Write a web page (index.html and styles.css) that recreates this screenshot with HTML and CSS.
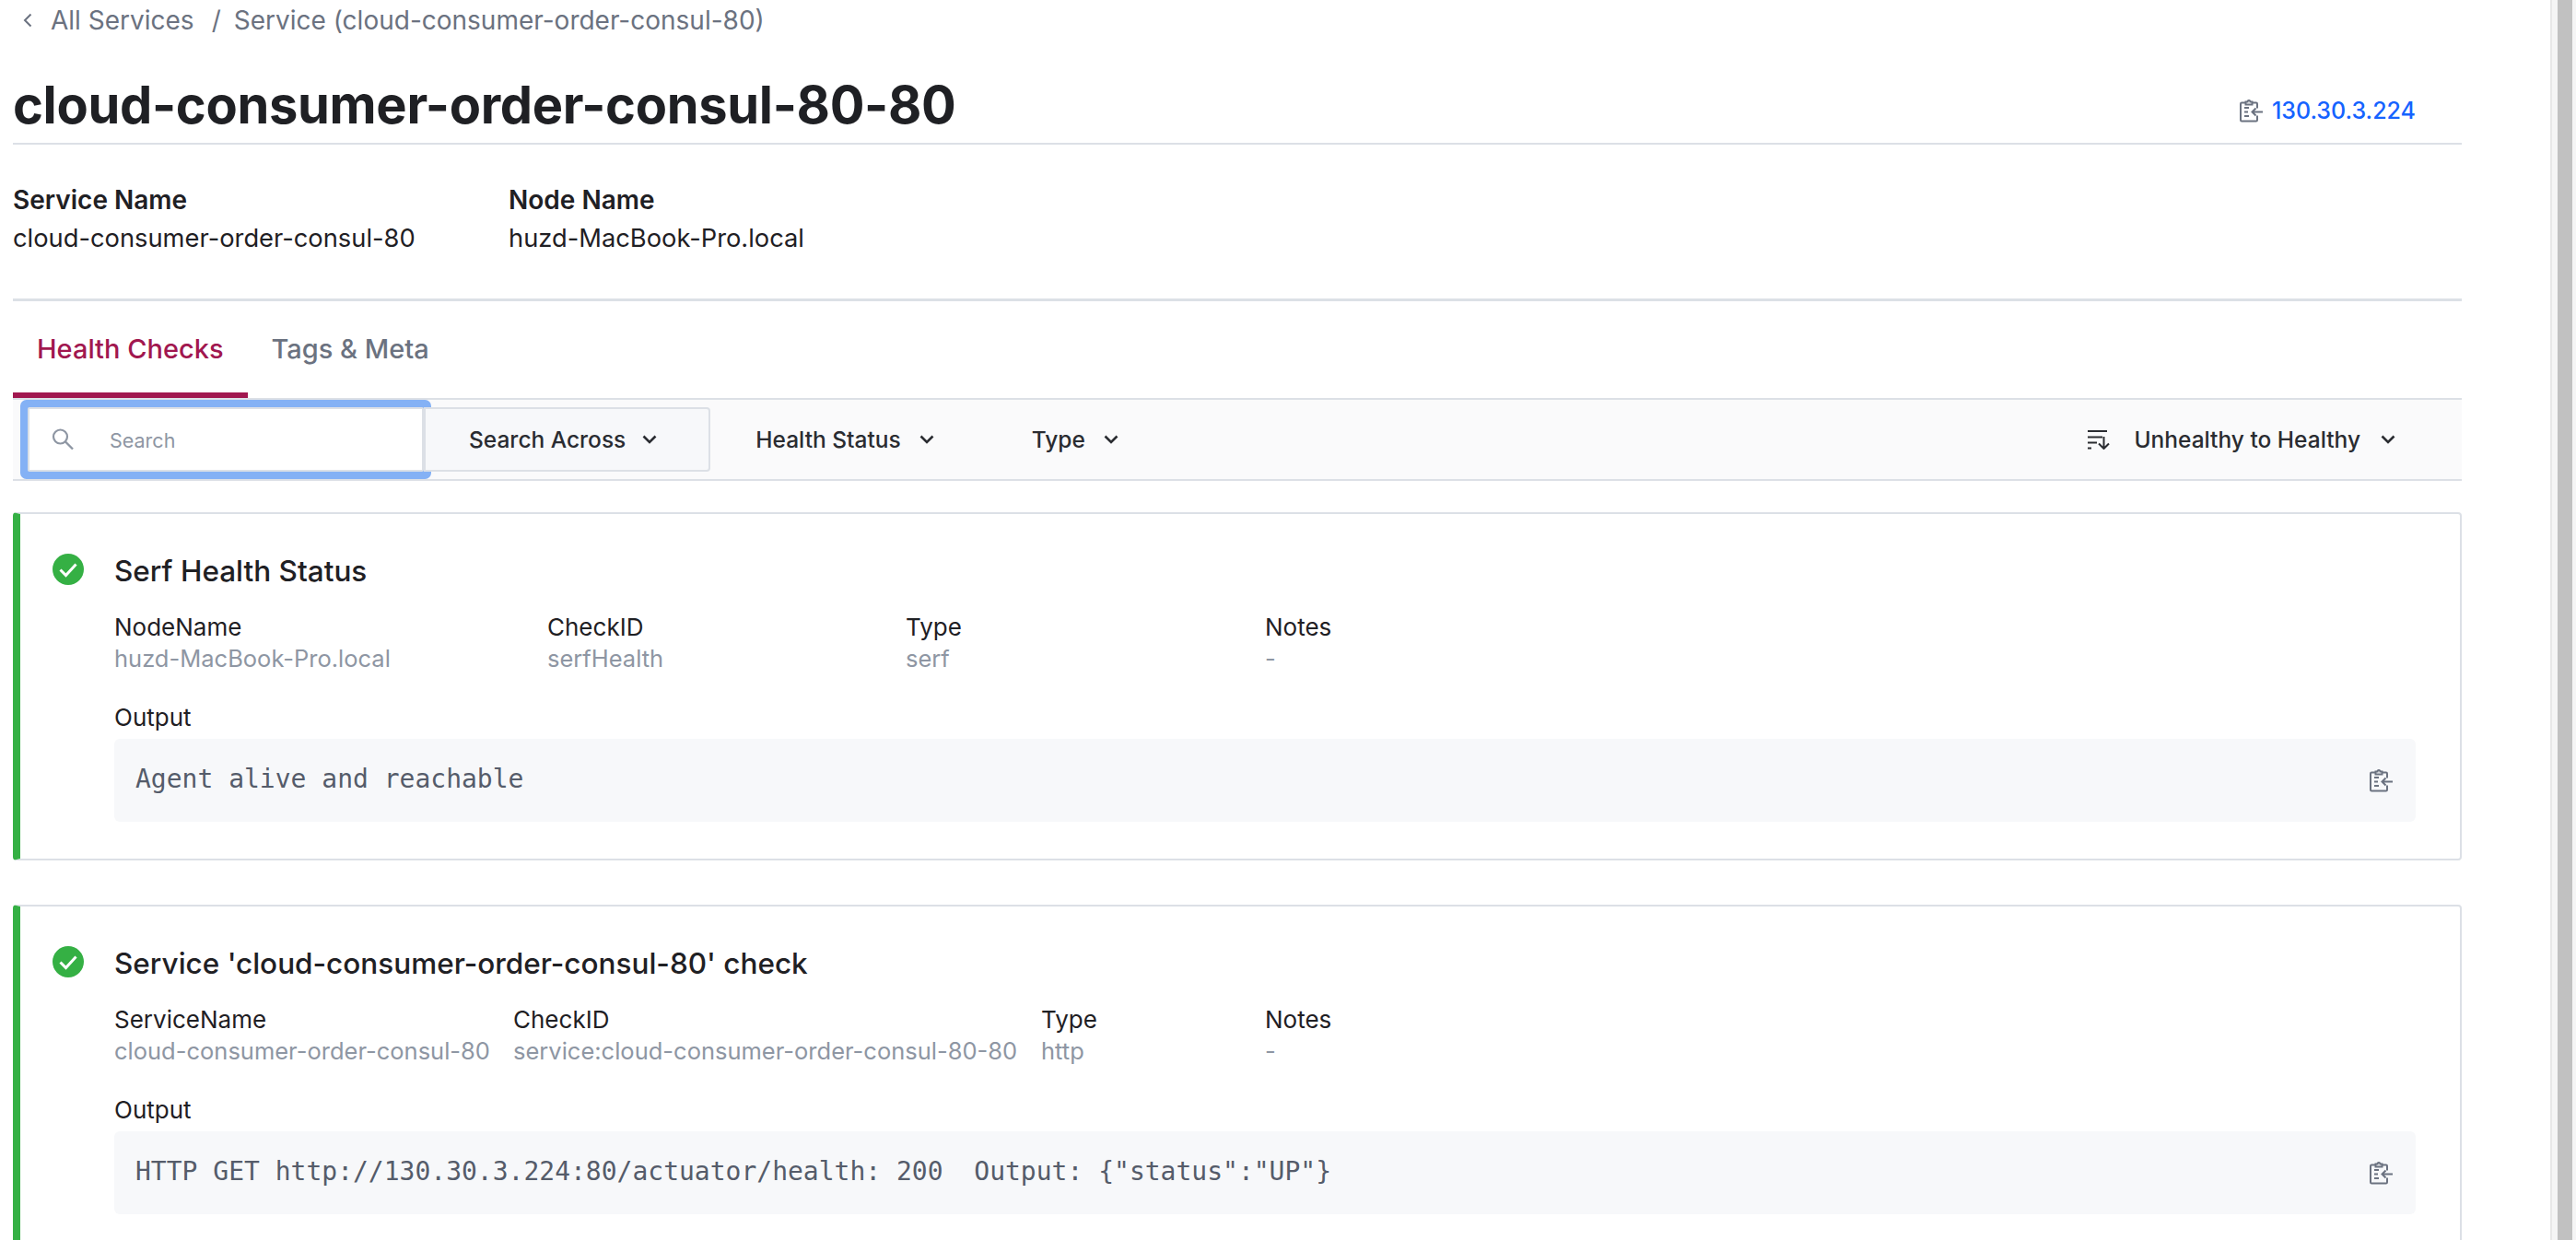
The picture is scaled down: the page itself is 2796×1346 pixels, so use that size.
FILE: index.html
```html
<!DOCTYPE html>
<html lang="en">
<head>
<meta charset="utf-8">
<title>cloud-consumer-order-consul-80-80</title>
<link rel="stylesheet" href="styles.css">
</head>
<body>
<svg class="sprite" width="0" height="0" aria-hidden="true">
  <symbol id="copy" viewBox="0 0 26 26">
    <path d="M7 4.500H3.200a1.200 1.200 0 0 0-1.200 1.200v17.600a1.200 1.200 0 0 0 1.200 1.200h15.600a1.200 1.200 0 0 0 1.200-1.200v-4.800M20 10.500V5.700a1.200 1.200 0 0 0-1.200-1.200H15" fill="none" stroke="currentColor" stroke-width="2"/>
    <path d="M7.500 3.500h2a1.500 1.500 0 0 1 3 0h2v3h-7z" fill="none" stroke="currentColor" stroke-width="2"/>
    <path d="M6 10h5M6 14.500h4M6 19h5" fill="none" stroke="currentColor" stroke-width="2"/>
    <path d="M26 14.500H14.500M18.500 10.500l-4 4 4 4" fill="none" stroke="currentColor" stroke-width="2"/>
  </symbol>
  <symbol id="chevron" viewBox="0 0 16 10">
    <path d="M1.500 1.500L8 8l6.500-6.500" fill="none" stroke="currentColor" stroke-width="2.600"/>
  </symbol>
  <symbol id="ok" viewBox="0 0 34 34">
    <circle cx="17" cy="17" r="17" fill="#35b044"/>
    <path d="M8.500 17.500l6 6 11-12" fill="none" stroke="#fff" stroke-width="3"/>
  </symbol>
</svg>

<div class="window">
  <main class="page">
    <nav class="crumbs">
      <svg class="crumb-back" viewBox="0 0 10 16" width="10" height="16"><path d="M8.500 1.500L2 8l6.500 6.500" fill="none" stroke="currentColor" stroke-width="2"/></svg>
      <a class="crumb">All Services</a>
      <span class="crumb-sep">/</span>
      <a class="crumb">Service (cloud-consumer-order-consul-80)</a>
    </nav>

    <header class="title-row">
      <h1 class="title">cloud-consumer-order-consul-80-80</h1>
      <div class="address">
        <svg class="icon-copy"><use href="#copy"/></svg>
        <span>130.30.3.224</span>
      </div>
    </header>

    <dl class="summary">
      <div class="summary-item summary-service">
        <dt>Service Name</dt>
        <dd>cloud-consumer-order-consul-80</dd>
      </div>
      <div class="summary-item">
        <dt>Node Name</dt>
        <dd>huzd-MacBook-Pro.local</dd>
      </div>
    </dl>

    <div class="tabs">
      <a class="tab tab-active">Health Checks</a>
      <a class="tab">Tags &amp; Meta</a>
    </div>

    <div class="toolbar">
      <label class="search">
        <svg class="search-icon" viewBox="0 0 24 24" width="24" height="24"><circle cx="9.500" cy="9" r="7.500" fill="none" stroke="currentColor" stroke-width="2.200"/><path d="M15 14.500l8 8" fill="none" stroke="currentColor" stroke-width="2.400"/></svg>
        <span class="search-hint">Search</span>
      </label>
      <button class="filter filter-across">Search Across <svg class="chevron"><use href="#chevron"/></svg></button>
      <button class="filter filter-health">Health Status <svg class="chevron"><use href="#chevron"/></svg></button>
      <button class="filter">Type <svg class="chevron"><use href="#chevron"/></svg></button>
      <button class="filter filter-sort">
        <svg class="sort-icon" viewBox="0 0 24 22" width="24" height="22"><path d="M0 2h21M0 8.500h16M0 14.500h10M0 20.500h4" fill="none" stroke="currentColor" stroke-width="2"/><path d="M17.500 8v13M12 15.500l5.500 5.500 5.500-5.500" fill="none" stroke="currentColor" stroke-width="2"/></svg>
        Unhealthy to Healthy <svg class="chevron"><use href="#chevron"/></svg>
      </button>
    </div>

    <section class="check">
      <svg class="check-status"><use href="#ok"/></svg>
      <div class="check-body">
        <h2 class="check-title">Serf Health Status</h2>
        <dl class="fields fields-node">
          <div><dt>NodeName</dt><dd>huzd-MacBook-Pro.local</dd></div>
          <div><dt>CheckID</dt><dd>serfHealth</dd></div>
          <div><dt>Type</dt><dd>serf</dd></div>
          <div><dt>Notes</dt><dd>-</dd></div>
        </dl>
        <div class="output-label">Output</div>
        <div class="output">
          <code>Agent alive and reachable</code>
          <svg class="icon-copy"><use href="#copy"/></svg>
        </div>
      </div>
    </section>

    <section class="check">
      <svg class="check-status"><use href="#ok"/></svg>
      <div class="check-body">
        <h2 class="check-title">Service 'cloud-consumer-order-consul-80' check</h2>
        <dl class="fields fields-service">
          <div><dt>ServiceName</dt><dd>cloud-consumer-order-consul-80</dd></div>
          <div><dt>CheckID</dt><dd>service:cloud-consumer-order-consul-80-80</dd></div>
          <div><dt>Type</dt><dd>http</dd></div>
          <div><dt>Notes</dt><dd>-</dd></div>
        </dl>
        <div class="output-label">Output</div>
        <div class="output">
          <code>HTTP GET http://130.30.3.224:80/actuator/health: 200  Output: {"status":"UP"}</code>
          <svg class="icon-copy"><use href="#copy"/></svg>
        </div>
      </div>
    </section>
  </main>

  <div class="scrollbar"><div class="scrollbar-thumb"></div></div>
</div>
</body>
</html>
```

FILE: styles.css
```css
* { box-sizing: border-box; }

html, body {
  margin: 0;
  height: 100%;
  overflow: hidden;
  background: #fff;
}

body {
  font-family: Inter, "Noto Sans", sans-serif;
  color: #1f2024;
}

.sprite { position: absolute; }

.window {
  display: flex;
  height: 1346px;
  overflow: hidden;
}

.page {
  flex: none;
  width: 2658px;
  margin: 0 96px 0 14px;
}

/* Custom scrollbar strip on the right edge */
.scrollbar {
  flex: none;
  width: 28px;
  padding: 0 4px 0 6px;
  background: #f5f5f5;
  border-left: 2px solid #e8e8e8;
}

.scrollbar-thumb {
  width: 16px;
  height: 100%;
  background: #c1c1c1;
}

/* Breadcrumb */
.crumbs {
  display: flex;
  align-items: center;
  height: 44px;
  padding-left: 11px;
  font-size: 28px;
  color: #6b7280;
}

.crumb-back { margin-right: 20px; }
.crumb-sep { margin: 0 14px 0 19px; }

/* Heading */
.title-row {
  display: flex;
  justify-content: space-between;
  align-items: flex-end;
  height: 113px;
  border-bottom: 2px solid #dce0e6;
}

.title {
  margin: 0 0 7px;
  font-size: 56px;
  line-height: 68px;
  font-weight: 700;
  letter-spacing: -0.33px;
  color: #1f2024;
}

.address {
  display: flex;
  align-items: center;
  gap: 10px;
  margin-bottom: 20px;
  padding-right: 50px;
  font-size: 25px;
  font-weight: 500;
  color: #1563ff;
}

.icon-copy {
  width: 26px;
  height: 26px;
  color: #6b7280;
  flex: none;
}

/* Service summary */
.summary {
  display: flex;
  margin: 0;
  height: 170px;
  padding-top: 39px;
  border-bottom: 3px solid #dce0e6;
  line-height: 42px;
}

.summary-service { width: 538px; }

.summary-item dt {
  font-size: 28px;
  font-weight: 600;
}

.summary-item dd {
  margin: 0;
  font-size: 27.3px;
}

/* Tabs */
.tabs {
  display: flex;
  height: 105px;
}

.tab {
  display: flex;
  align-items: center;
  height: 105px;
  padding: 0 26px 2px;
  font-size: 29px;
  font-weight: 500;
  color: #6b7280;
}

.tab-active {
  color: #a1174f;
  box-shadow: inset 0 -6px 0 #a1174f;
}

/* Filter bar */
.toolbar {
  display: flex;
  align-items: center;
  height: 90px;
  padding: 0 72px 0 16px;
  background: #fafafb;
  border-top: 2px solid #dce0e6;
  border-bottom: 2px solid #dce0e6;
}

.search {
  display: flex;
  align-items: center;
  width: 430px;
  height: 70px;
  padding-left: 24px;
  background: #fff;
  border: 2px solid #dce0e6;
  box-shadow: 0 0 0 8px #84b1f5;
  border-radius: 2px;
  color: #8e96a3;
}

.search-hint {
  margin-left: 39px;
  padding-top: 2px;
  font-size: 21.5px;
}

.filter {
  display: flex;
  align-items: center;
  gap: 20px;
  height: 70px;
  padding: 0 54px 0 50px;
  background: none;
  border: 0;
  font: 500 24.5px Inter, "Noto Sans", sans-serif;
  color: #2a2c31;
}

.filter-across {
  position: relative;
  padding: 0 56px 0 47px;
  background: #f7f8fa;
  border: 2px solid #dce0e6;
  border-radius: 0 4px 4px 0;
  gap: 18px;
}

.filter-health {
  padding-left: 49px;
  padding-right: 56px;
}

.filter-sort {
  margin-left: auto;
  padding: 0;
  gap: 22px;
}

.sort-icon { margin-right: 4px; }

.chevron {
  width: 16px;
  height: 10px;
}

/* Health check cards */
.check {
  display: flex;
  height: 378px;
  margin-top: 34px;
  padding: 43px 48px 0 35px;
  border: 2px solid #dce0e6;
  border-left: 8px solid #35b044;
  border-radius: 4px;
}

.check + .check { margin-top: 48px; }

.check-status {
  flex: none;
  width: 34px;
  height: 34px;
  margin-right: 33px;
}

.check-body { flex: 1; min-width: 0; }

.check-title {
  margin: 0;
  font-size: 31.5px;
  line-height: 38px;
  font-weight: 550;
  color: #1f2024;
}

.fields {
  display: grid;
  margin: 25px 0 0;
  line-height: 34px;
}

.fields dt { font-size: 26px; }

.fields-node { grid-template-columns: 470px 389px 390px 1fr; }
.fields-service { grid-template-columns: 433px 573px 243px 1fr; }

.fields dd {
  margin: 0;
  font-size: 25.5px;
  color: #8e96a3;
}

.output-label {
  margin-top: 30px;
  font-size: 26px;
  line-height: 34px;
}

.output {
  display: flex;
  align-items: center;
  justify-content: space-between;
  height: 90px;
  margin-top: 6px;
  padding: 0 25px 3px 23px;
  background: #f7f8fa;
  border-radius: 6px;
}

.output code {
  font-family: "DejaVu Sans Mono", "Liberation Mono", monospace;
  font-size: 28px;
  color: #555c6a;
  white-space: pre;
}

.output .icon-copy { margin-top: 3px; }
```
